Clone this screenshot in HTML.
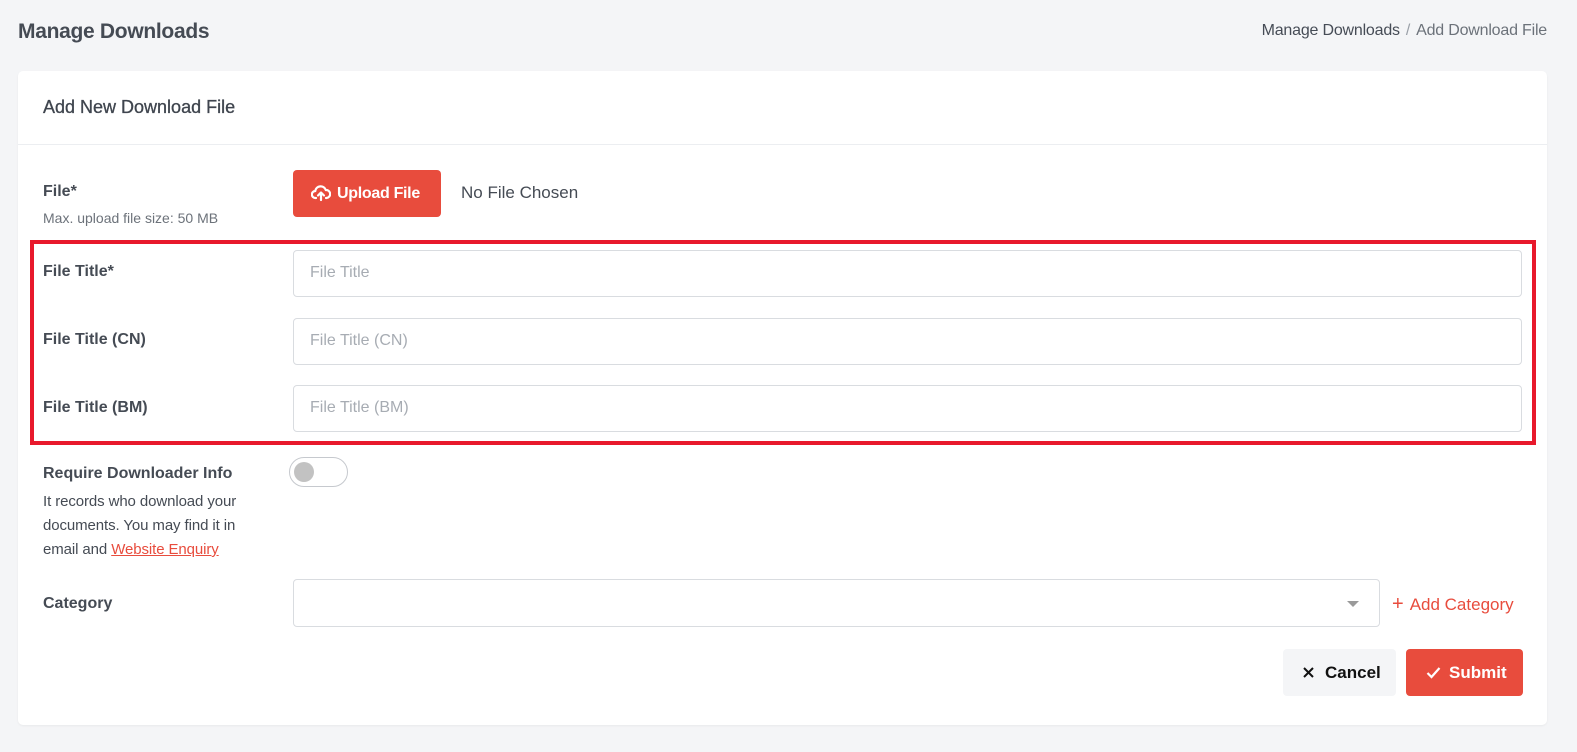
<!DOCTYPE html>
<html><head><meta charset="utf-8"><style>
*{box-sizing:border-box;margin:0;padding:0}
body{width:1577px;height:752px;background:#f4f5f7;font-family:"Liberation Sans",sans-serif;color:#464c56;position:relative;overflow:hidden}
.abs{position:absolute}
h1{position:absolute;left:18px;top:20px;font-size:21px;font-weight:bold;color:#454b54;letter-spacing:-0.3px}
.bc{position:absolute;right:30px;top:22px;font-size:16px;color:#464c56;letter-spacing:-0.2px}
.bc span{color:#9aa0a8;margin:0 6px}
.bc i{font-style:normal;color:#6c727a}
.card{position:absolute;left:18px;top:71px;width:1529px;height:654px;background:#fff;border-radius:5px;box-shadow:0 1px 2px rgba(0,0,0,.05)}
.hd{position:absolute;left:0;top:0;width:100%;height:74px;border-bottom:1px solid #eceef1}
.hd div{position:absolute;left:25px;top:26px;font-size:18px;color:#3f454e;-webkit-text-stroke:0.3px #3f454e}
.lbl{position:absolute;left:43px;font-size:16px;font-weight:bold;color:#454b54}
.small{position:absolute;left:43px;font-size:14px;color:#6c727a}
.inp{position:absolute;left:293px;width:1229px;height:47px;border:1px solid #d9dce0;border-radius:4px;font-size:16px;color:#a7acb3;padding:13px 16px}
.btn{position:absolute;border-radius:4px;font-size:16px;font-weight:bold;color:#fff;background:#e84c3d}
</style></head><body>
<h1>Manage Downloads</h1>
<div class="bc">Manage Downloads<span>/</span><i>Add Download File</i></div>
<div class="card"><div class="hd"><div>Add New Download File</div></div></div>

<div class="lbl" style="top:183px">File*</div>
<div class="small" style="top:210px">Max. upload file size: 50 MB</div>
<div class="btn" style="left:293px;top:170px;width:148px;height:47px">
<svg class="abs" style="left:18px;top:15px" width="20" height="17" viewBox="0 0 20 17"><path d="M5 13H4.5A3.5 3.5 0 0 1 4.2 6 5.5 5.5 0 0 1 14.8 5 4 4 0 0 1 15.5 13H15" fill="none" stroke="#fff" stroke-width="2.2" stroke-linecap="round"/><path d="M10 15V8M7 10.5L10 7.5 13 10.5" fill="none" stroke="#fff" stroke-width="2.2" stroke-linecap="round" stroke-linejoin="round"/></svg>
<span class="abs" style="left:44px;top:15px;letter-spacing:-0.3px">Upload File</span></div>
<div class="abs" style="left:461px;top:183px;font-size:17px;color:#454b54">No File Chosen</div>

<div class="abs" style="left:30px;top:240px;width:1506px;height:205px;border:4px solid #e8192c"></div>
<div class="lbl" style="top:263px">File Title*</div>
<div class="inp" style="top:250px">File Title</div>
<div class="lbl" style="top:331px">File Title (CN)</div>
<div class="inp" style="top:318px">File Title (CN)</div>
<div class="lbl" style="top:399px">File Title (BM)</div>
<div class="inp" style="top:385px">File Title (BM)</div>

<div class="lbl" style="top:465px">Require Downloader Info</div>
<div class="abs" style="left:43px;top:490px;font-size:15px;line-height:24px;color:#454b54;width:230px;letter-spacing:-0.1px">It records who download your documents. You may find it in email and <span style="color:#e84c3d;text-decoration:underline">Website Enquiry</span></div>
<div class="abs" style="left:289px;top:457px;width:59px;height:30px;border:1px solid #c6c9ce;border-radius:15px"><div class="abs" style="left:4px;top:4px;width:20px;height:20px;border-radius:50%;background:#c2c2c2"></div></div>

<div class="lbl" style="top:595px">Category</div>
<div class="abs" style="left:293px;top:579px;width:1087px;height:48px;border:1px solid #d9dce0;border-radius:4px"><div class="abs" style="right:20px;top:21px;border-left:6px solid transparent;border-right:6px solid transparent;border-top:6px solid #9a9a9a"></div></div>
<div class="abs" style="left:1392px;top:593px;font-size:17px;color:#e84c3d"><span style="font-size:20px;margin-right:6px">+</span>Add Category</div>

<div class="abs" style="left:1283px;top:649px;width:113px;height:47px;background:#f4f5f7;border-radius:4px;font-size:17px;font-weight:bold;color:#111">
<svg class="abs" style="left:20px;top:18px" width="11" height="11"><path d="M1 1L10 10M10 1L1 10" stroke="#111" stroke-width="2"/></svg>
<span class="abs" style="left:42px;top:14px">Cancel</span></div>
<div class="btn" style="left:1406px;top:649px;width:117px;height:47px;font-size:17px">
<svg class="abs" style="left:20px;top:17px" width="15" height="13"><path d="M1.5 7L5.5 11 13.5 2" fill="none" stroke="#fff" stroke-width="2.2"/></svg>
<span class="abs" style="left:43px;top:14px">Submit</span></div>
</body></html>
